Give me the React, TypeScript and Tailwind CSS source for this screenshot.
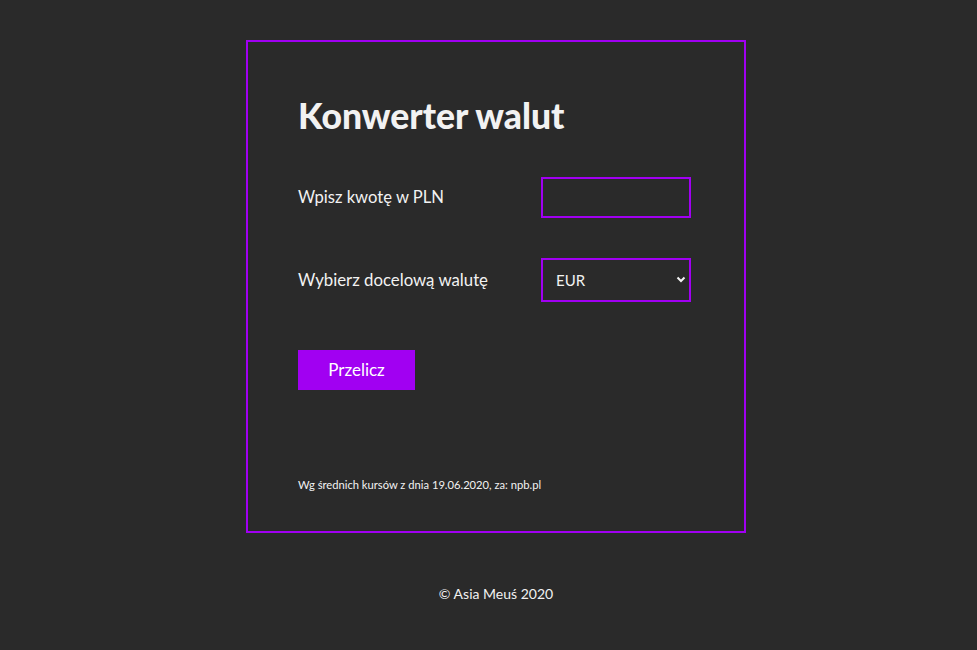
const App = () => {
  return (
    <div className="min-h-[650px] bg-[#2a2a2a] text-[#f2f2f2] font-['Lato','Liberation_Sans',sans-serif] pt-10 pl-[15px]">
      <div className="mx-auto w-[500px] h-[493px] border-2 border-[#a100f2] px-[50px] pt-[52px] flex flex-col">
        <h1 className="text-[35.5px] font-black leading-[44px]">Konwerter walut</h1>

        <div className="mt-[39px] flex items-center justify-between pr-[3px]">
          <label className="text-[16.6px]">Wpisz kwotę w PLN</label>
          <input type="text" className="w-[150px] h-[41px] border-2 border-[#a100f2] bg-transparent outline-none text-white px-3" />
        </div>

        <div className="mt-[40px] flex items-center justify-between pr-[3px]">
          <label className="text-[16.8px]">Wybierz docelową walutę</label>
          <div className="relative w-[150px] h-[44px] border-2 border-[#a100f2] flex items-center pl-[13px] text-[15px]">
            <span>EUR</span>
            <svg className="absolute right-[3px] top-[15px]" width="10" height="8" viewBox="0 0 10 8" fill="none" stroke="#f2f2f2" strokeWidth="2">
              <path d="M1.5 2.5 L5 6 L8.5 2.5" />
            </svg>
          </div>
        </div>

        <button className="mt-[48px] w-[117px] h-[40px] bg-[#a100f2] text-[17px] text-white">Przelicz</button>

        <p className="mt-[87px] text-[11.2px]">Wg średnich kursów z dnia 19.06.2020, za: npb.pl</p>
      </div>
      <p className="mt-[50px] text-center text-[14px]">© Asia Meuś 2020</p>
    </div>
  );
};

export default App;
